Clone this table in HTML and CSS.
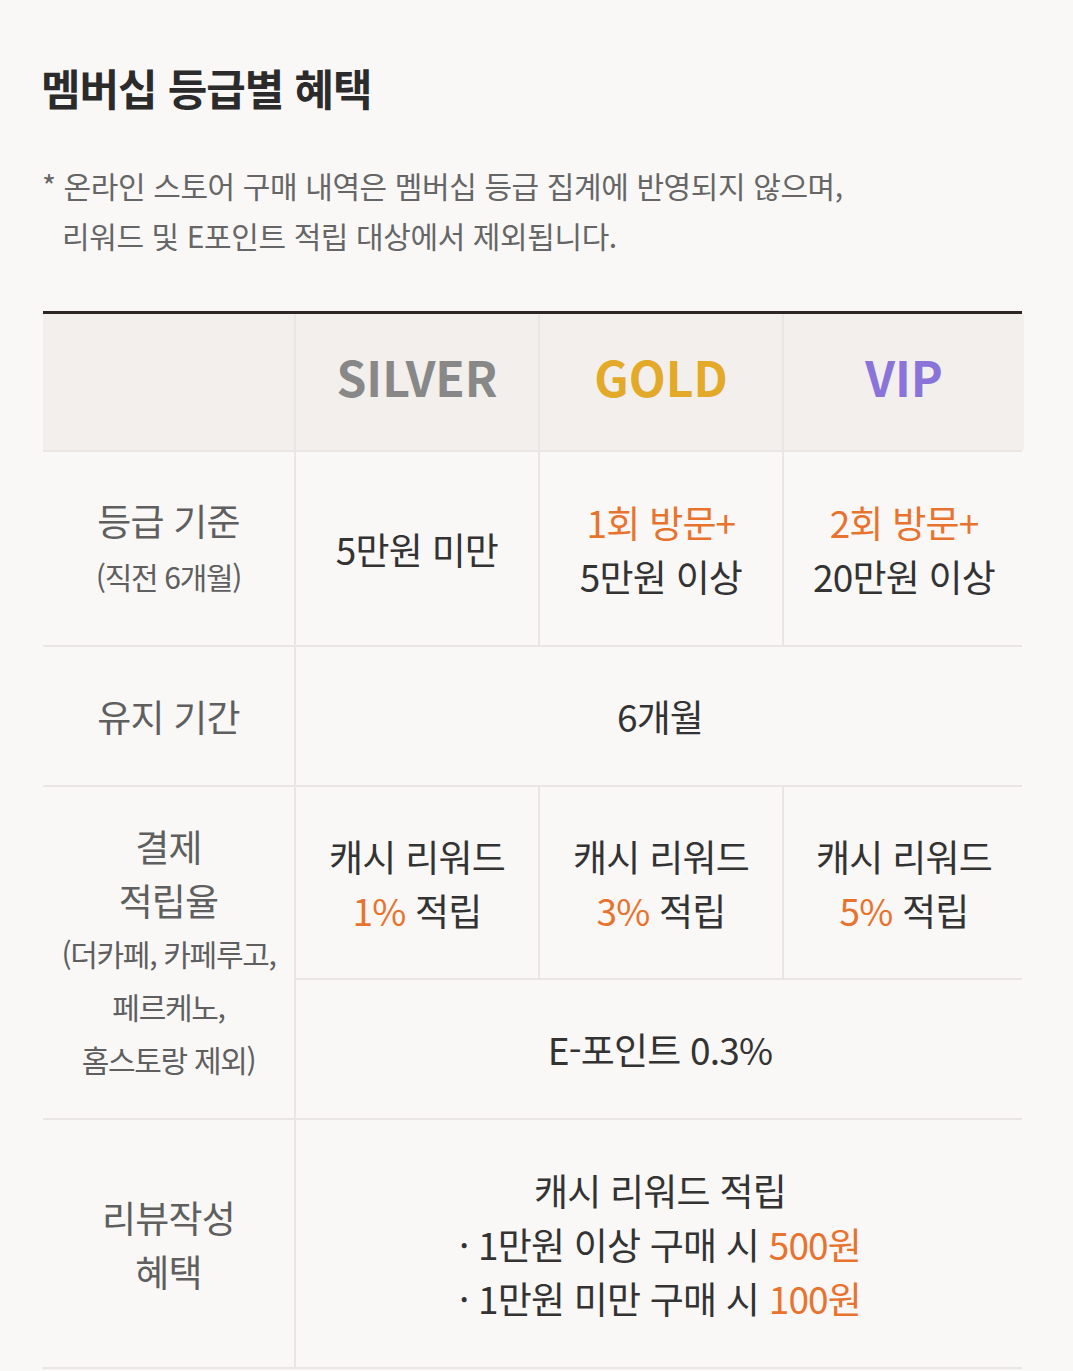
FILE: index.html
```html
<!DOCTYPE html>
<html lang="ko">
<head>
<meta charset="utf-8">
<link rel="stylesheet" href="styles.css">
</head>
<body>
<div class="page">
  <h1 class="title">멤버십 등급별 혜택</h1>
  <p class="note">* 온라인 스토어 구매 내역은 멤버십 등급 집계에 반영되지 않으며,<br><span class="indent">리워드 및 E포인트 적립 대상에서 제외됩니다.</span></p>
  <div class="table">
    <div class="cell head"></div>
    <div class="cell head silver">SILVER</div>
    <div class="cell head gold">GOLD</div>
    <div class="cell head vip">VIP</div>

    <div class="cell label"><div class="in">등급 기준<span class="sub sub1">(직전 6개월)</span></div></div>
    <div class="cell val"><div class="in">5만원 미만</div></div>
    <div class="cell val"><div class="in"><span class="hl">1회 방문+</span><br>5만원 이상</div></div>
    <div class="cell val"><div class="in"><span class="hl">2회 방문+</span><br>20만원 이상</div></div>

    <div class="cell label"><div class="in">유지 기간</div></div>
    <div class="cell val span3"><div class="in">6개월</div></div>

    <div class="cell label rows2"><div class="in">결제<br>적립율<span class="sub">(더카페, 카페루고,<br>페르케노,<br>홈스토랑 제외)</span></div></div>
    <div class="cell val"><div class="in">캐시 리워드<br><span class="hl">1%</span> 적립</div></div>
    <div class="cell val"><div class="in">캐시 리워드<br><span class="hl">3%</span> 적립</div></div>
    <div class="cell val"><div class="in">캐시 리워드<br><span class="hl">5%</span> 적립</div></div>
    <div class="cell val span3"><div class="in">E-포인트 0.3%</div></div>

    <div class="cell label"><div class="in">리뷰작성<br>혜택</div></div>
    <div class="cell val span3"><div class="in">캐시 리워드 적립<br>· 1만원 이상 구매 시 <span class="hl">500원</span><br>· 1만원 미만 구매 시 <span class="hl">100원</span></div></div>
  </div>
</div>
</body>
</html>
```

FILE: styles.css
```css
html, body {
  margin: 0;
  padding: 0;
  background: #f9f8f7;
}
body {
  font-family: "Noto Sans CJK KR", "Noto Sans", sans-serif;
  color: #333;
}
.page {
  padding: 52px 51px 0 43px;
}
.title {
  margin: 0;
  font-size: 43px;
  font-weight: 700;
  color: #2b2b2b;
  letter-spacing: -1px;
  line-height: 70px;
  margin-left: -2px;
}
.note {
  margin: 38px 0 0 0;
  font-size: 30px;
  line-height: 50px;
  color: #666;
  letter-spacing: -0.4px;
  margin-left: -1px;
}
.note .indent {
  padding-left: 20px;
}
.table {
  margin-top: 51px;
  display: grid;
  grid-template-columns: 251px 242px 242px 240px;
  grid-template-rows: 136px 193px 138px 191px 138px 247px;
  gap: 2px;
  background: #e9e6e4;
  border-top: 3px solid #2d2624;
  border-bottom: 2px solid #e9e6e4;
}
.cell {
  background: #f9f8f7;
  display: flex;
  align-items: center;
  justify-content: center;
  text-align: center;
  font-size: 37px;
  line-height: 54px;
  letter-spacing: -0.8px;
}
.head {
  background: #f2efed;
  font-size: 48px;
  font-weight: 700;
  letter-spacing: 0;
  padding-bottom: 12px;
  box-sizing: border-box;
}
.silver { color: #888; }
.gold { color: #e3aa2a; }
.vip { color: #8a74d9; }
.label {
  color: #5f5f5f;
}
.rows2 { grid-row: span 2; }
.label .sub {
  display: block;
  font-size: 30px;
  line-height: 53px;
  letter-spacing: -1.3px;
}
.label .sub1 {
  line-height: 58px;
}
.val { color: #333; }
.span3 { grid-column: span 3; }
.hl { color: #e8732e; }
```
